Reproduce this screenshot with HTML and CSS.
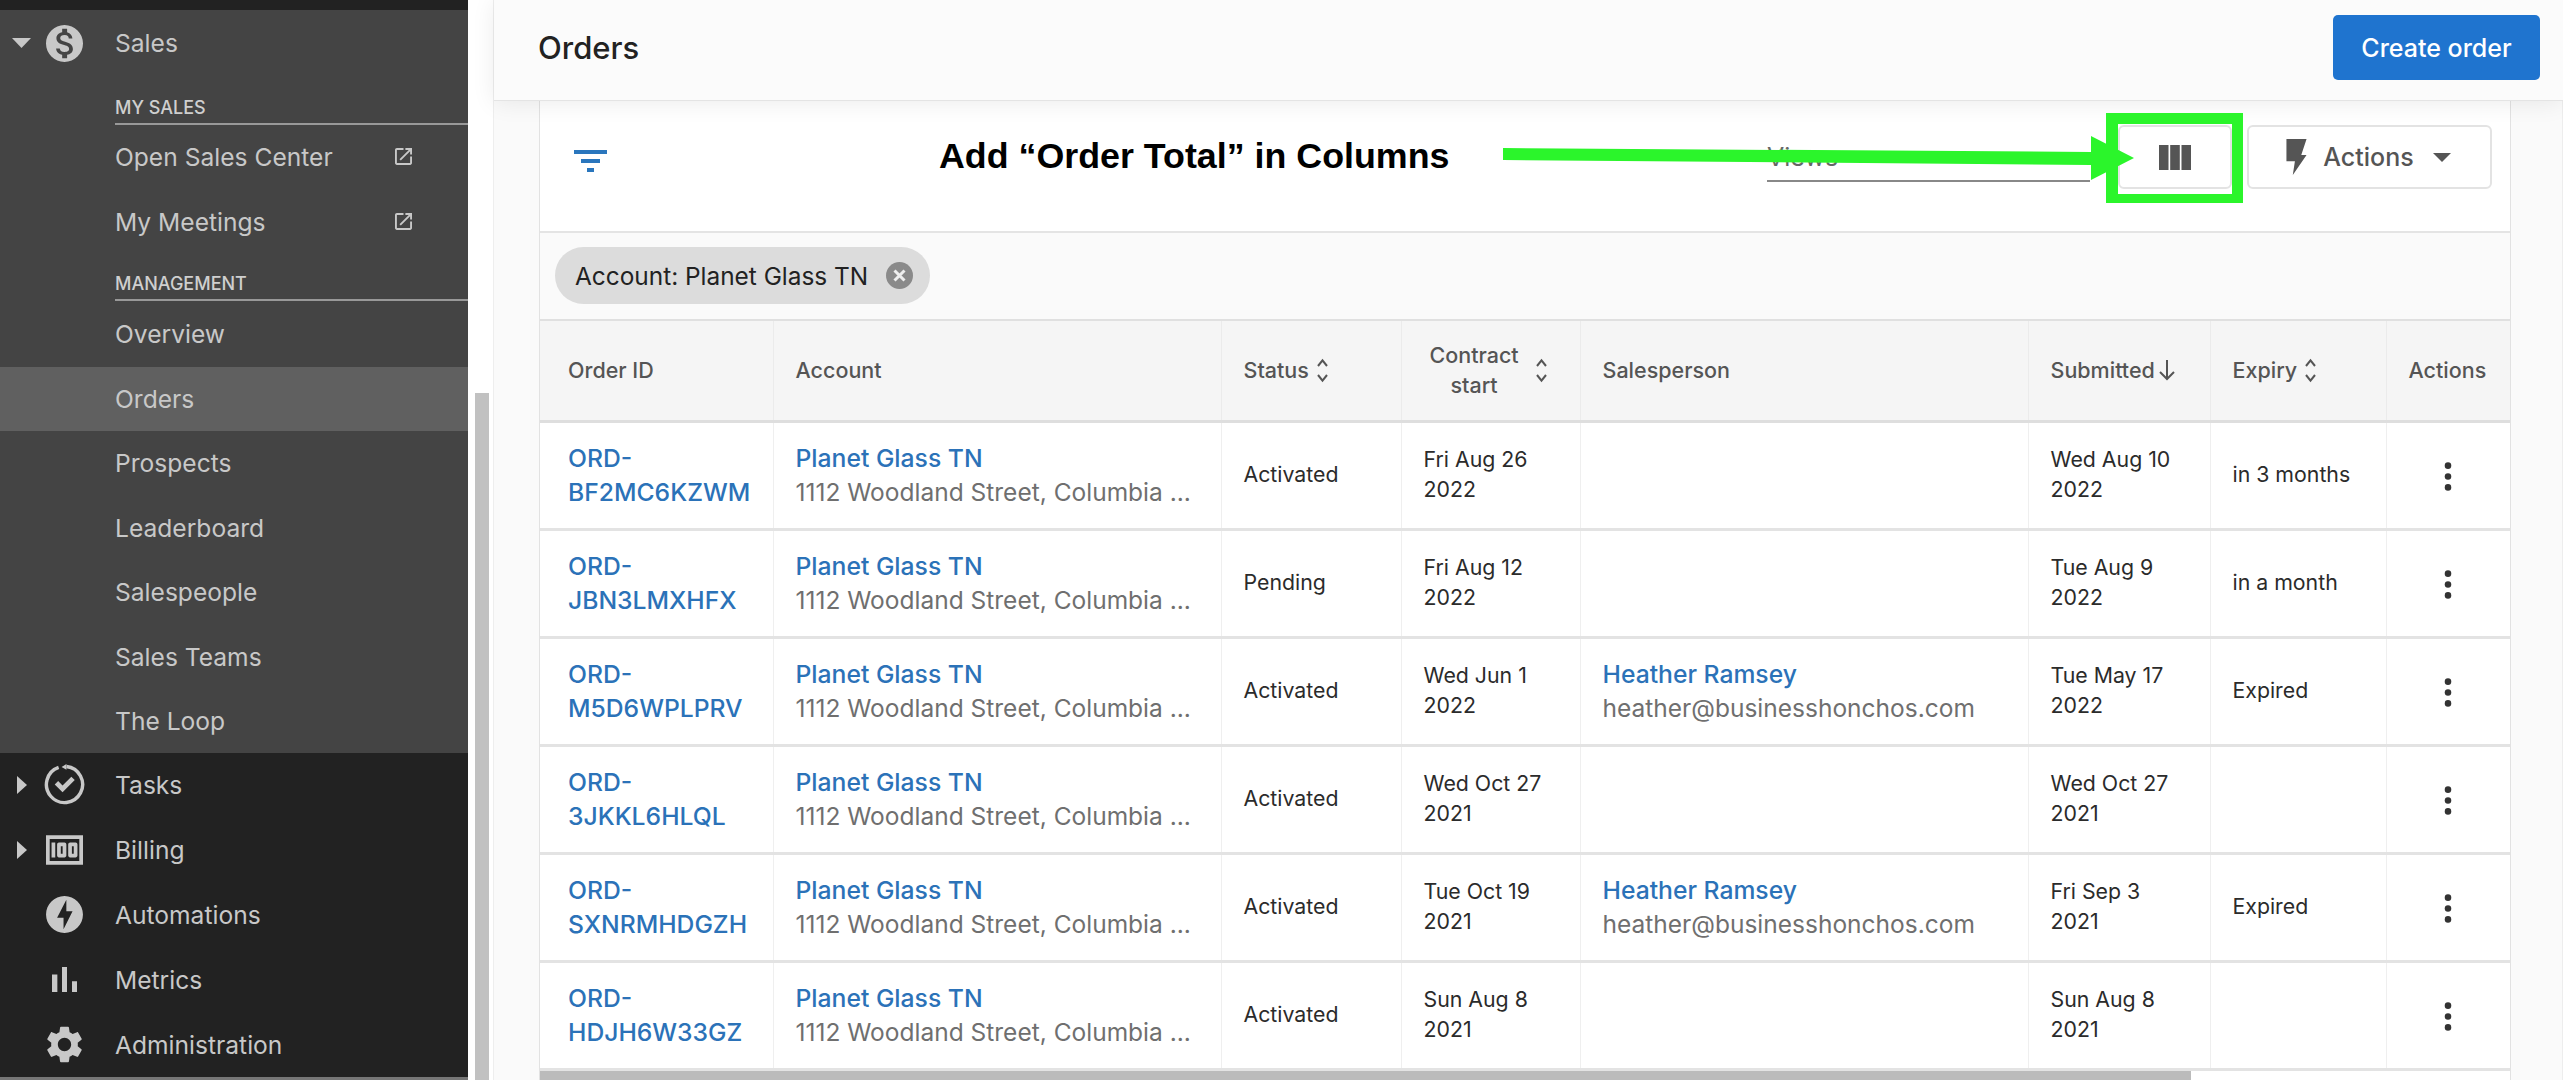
FILE: index.html
```html
<!DOCTYPE html>
<html lang="en">
<head>
<meta charset="utf-8">
<title>Orders</title>
<link rel="stylesheet" href="styles.css">
</head>
<body>
<aside class="sidebar">
  <div class="top-strip"></div>
  <div class="submenu">
    <div class="nav-row nav-main">
      <svg class="caret" viewBox="0 0 19 10"><path d="M0 0h19L9.500 10z"/></svg>
      <svg class="nav-icon" viewBox="2 2 20 20"><path d="M12 2C6.480 2 2 6.480 2 12s4.480 10 10 10 10-4.480 10-10S17.520 2 12 2zm1.410 16.090V20h-2.670v-1.930c-1.710-.36-3.160-1.460-3.270-3.400h1.960c.1 1.050.82 1.870 2.650 1.870 1.960 0 2.400-.98 2.400-1.590 0-.83-.44-1.610-2.670-2.140-2.480-.6-4.180-1.620-4.180-3.670 0-1.720 1.390-2.840 3.110-3.210V4h2.670v1.950c1.860.45 2.790 1.860 2.850 3.390H14.300c-.05-1.110-.64-1.870-2.220-1.870-1.500 0-2.400.68-2.400 1.640 0 .84.65 1.390 2.670 1.910s4.180 1.390 4.180 3.910c-.01 1.830-1.380 2.830-3.120 3.160z"/></svg>
      <span>Sales</span>
    </div>
    <div class="nav-section first">MY SALES</div>
    <div class="nav-row nav-sub"><span>Open Sales Center</span>
      <svg class="ext" viewBox="3 3 18 18"><path d="M19 19H5V5h7V3H5c-1.110 0-2 .9-2 2v14c0 1.100.89 2 2 2h14c1.100 0 2-.9 2-2v-7h-2v7zM14 3v2h3.590l-9.830 9.830 1.410 1.410L19 6.410V10h2V3h-7z"/></svg></div>
    <div class="nav-row nav-sub"><span>My Meetings</span>
      <svg class="ext" viewBox="3 3 18 18"><path d="M19 19H5V5h7V3H5c-1.110 0-2 .9-2 2v14c0 1.100.89 2 2 2h14c1.100 0 2-.9 2-2v-7h-2v7zM14 3v2h3.590l-9.830 9.830 1.410 1.410L19 6.410V10h2V3h-7z"/></svg></div>
    <div class="nav-section">MANAGEMENT</div>
    <div class="nav-row nav-sub"><span>Overview</span></div>
    <div class="nav-row nav-sub active"><span>Orders</span></div>
    <div class="nav-row nav-sub"><span>Prospects</span></div>
    <div class="nav-row nav-sub"><span>Leaderboard</span></div>
    <div class="nav-row nav-sub"><span>Salespeople</span></div>
    <div class="nav-row nav-sub"><span>Sales Teams</span></div>
    <div class="nav-row nav-sub"><span>The Loop</span></div>
  </div>
  <div class="nav-row nav-main">
    <svg class="caret-r" viewBox="0 0 10 18"><path d="M0 0l10 9-10 9z"/></svg>
    <svg class="nav-icon large" viewBox="0 0 44 44"><path class="ring" d="M24 3.600A18.500 18.500 0 1 1 16 4.500"/><path d="M24 1v6l-5-3zM12 22l3.500-3.500 4.500 4.500 9-9 3.500 3.500L20 30z"/></svg>
    <span>Tasks</span>
  </div>
  <div class="nav-row nav-main">
    <svg class="caret-r" viewBox="0 0 10 18"><path d="M0 0l10 9-10 9z"/></svg>
    <svg class="nav-icon money" viewBox="2 4 20 16"><path d="M5 8h2v8H5zm7 0H9c-.55 0-1 .45-1 1v6c0 .55.45 1 1 1h3c.55 0 1-.45 1-1V9c0-.55-.45-1-1-1zm-1 6h-1v-4h1v4zm7-6h-3c-.55 0-1 .45-1 1v6c0 .55.45 1 1 1h3c.55 0 1-.45 1-1V9c0-.55-.45-1-1-1zm-1 6h-1v-4h1v4zM2 4v16h20V4H2zm2 14V6h16v12H4z"/></svg>
    <span>Billing</span>
  </div>
  <div class="nav-row nav-main">
    <svg class="nav-icon" viewBox="2 2 20 20"><path d="M12 2.020c-5.510 0-9.980 4.470-9.980 9.980s4.470 9.980 9.980 9.980 9.980-4.470 9.980-9.980S17.510 2.020 12 2.020zM11.480 20v-6.260H8L13 4v6.260h3.350L11.480 20z"/></svg>
    <span>Automations</span>
  </div>
  <div class="nav-row nav-main">
    <svg class="nav-icon bars" viewBox="5 5 14 14"><path d="M5 9.200h3V19H5zM10.600 5h2.800v14h-2.800zm5.600 8H19v6h-2.800z"/></svg>
    <span>Metrics</span>
  </div>
  <div class="nav-row nav-main">
    <svg class="nav-icon" viewBox="2.500 2 19 20"><path d="M19.140 12.940c.04-.3.06-.61.06-.94 0-.32-.02-.64-.07-.94l2.030-1.580c.18-.14.23-.41.12-.61l-1.920-3.320c-.12-.22-.37-.29-.59-.22l-2.390.96c-.5-.38-1.030-.7-1.620-.94l-.36-2.540c-.04-.24-.24-.41-.48-.41h-3.840c-.24 0-.43.17-.47.41l-.36 2.540c-.59.24-1.130.57-1.620.94l-2.390-.96c-.22-.08-.47 0-.59.22L2.740 8.870c-.12.21-.08.47.12.61l2.030 1.580c-.05.3-.09.63-.09.94s.02.64.07.94l-2.030 1.580c-.18.14-.23.41-.12.61l1.920 3.320c.12.22.37.29.59.22l2.390-.96c.5.38 1.030.7 1.620.94l.36 2.540c.05.24.24.41.48.41h3.840c.24 0 .44-.17.47-.41l.36-2.540c.59-.24 1.130-.56 1.620-.94l2.390.96c.22.08.47 0 .59-.22l1.920-3.320c.12-.22.07-.47-.12-.61l-2.010-1.580zM12 15.600c-1.980 0-3.600-1.620-3.600-3.600s1.620-3.600 3.600-3.600 3.600 1.620 3.600 3.600-1.620 3.600-3.600 3.600z"/></svg>
    <span>Administration</span>
  </div>
</aside>
<div class="gutter"><div class="thumb"></div></div>
<main class="main">
  <header class="page-header">
    <h1>Orders</h1>
    <button class="btn-primary">Create order</button>
  </header>
  <div class="content">
    <section class="card">
      <div class="toolbar">
        <svg class="filter-icon" viewBox="0 0 33 22"><path d="M0 0h33v4H0zM7 9h19v4H7zM13 18h7v4h-7z"/></svg>
        <div class="views"><span>Views</span><i class="views-caret"></i></div>
        <button class="btn-outline btn-cols"><svg viewBox="0 0 32 25"><path d="M0 0h9.500v25H0zM11.200 0h9.600v25h-9.600zM22.500 0H32v25h-9.500z"/></svg></button>
        <button class="btn-outline btn-actions">
          <svg class="bolt" viewBox="0 0 19 34"><path d="M0 0H19L14 15H19L6 34L8 21H0z"/></svg>
          <span>Actions</span>
          <svg class="drop" viewBox="0 0 18 9"><path d="M0 0h18L9 9z"/></svg>
        </button>
      </div>
      <div class="chips">
        <div class="chip"><span>Account: Planet Glass TN</span>
          <svg viewBox="0 0 27 27"><circle cx="13.500" cy="13.500" r="13.500"/><path d="M8.500 8.500l10 10M18.500 8.500l-10 10"/></svg></div>
      </div>
      <table class="orders">
        <colgroup><col class="c1"><col class="c2"><col class="c3"><col class="c4"><col class="c5"><col class="c6"><col class="c7"><col class="c8"></colgroup>
        <thead>
          <tr>
            <th>Order ID</th>
            <th>Account</th>
            <th><div class="th-flex">Status <svg class="sort" viewBox="0 0 12 24"><path d="M2 8l4-5 4 5M2 16l4 5 4-5"/></svg></div></th>
            <th class="th-contract"><div class="th-flex"><span class="center">Contract<br>start</span><svg class="sort" viewBox="0 0 12 24"><path d="M2 8l4-5 4 5M2 16l4 5 4-5"/></svg></div></th>
            <th>Salesperson</th>
            <th><div class="th-flex tight">Submitted<svg class="sort-down" viewBox="0 0 20 24"><path d="M10 2v19M3 14l7 7 7-7"/></svg></div></th>
            <th><div class="th-flex">Expiry <svg class="sort" viewBox="0 0 12 24"><path d="M2 8l4-5 4 5M2 16l4 5 4-5"/></svg></div></th>
            <th>Actions</th>
          </tr>
        </thead>
        <tbody>
          <tr>
            <td class="id"><a>ORD-<br>BF2MC6KZWM</a></td>
            <td><a class="name">Planet Glass TN</a><div class="sub">1112 Woodland Street, Columbia ...</div></td>
            <td>Activated</td><td>Fri Aug 26<br>2022</td><td></td><td>Wed Aug 10<br>2022</td><td>in 3 months</td>
            <td class="kebab"><svg viewBox="0 0 8 32"><circle cx="4" cy="4" r="3.600"/><circle cx="4" cy="16" r="3.600"/><circle cx="4" cy="28" r="3.600"/></svg></td>
          </tr>
          <tr>
            <td class="id"><a>ORD-<br>JBN3LMXHFX</a></td>
            <td><a class="name">Planet Glass TN</a><div class="sub">1112 Woodland Street, Columbia ...</div></td>
            <td>Pending</td><td>Fri Aug 12<br>2022</td><td></td><td>Tue Aug 9<br>2022</td><td>in a month</td>
            <td class="kebab"><svg viewBox="0 0 8 32"><circle cx="4" cy="4" r="3.600"/><circle cx="4" cy="16" r="3.600"/><circle cx="4" cy="28" r="3.600"/></svg></td>
          </tr>
          <tr>
            <td class="id"><a>ORD-<br>M5D6WPLPRV</a></td>
            <td><a class="name">Planet Glass TN</a><div class="sub">1112 Woodland Street, Columbia ...</div></td>
            <td>Activated</td><td>Wed Jun 1<br>2022</td>
            <td><a class="name">Heather Ramsey</a><div class="sub">heather@businesshonchos.com</div></td>
            <td>Tue May 17<br>2022</td><td>Expired</td>
            <td class="kebab"><svg viewBox="0 0 8 32"><circle cx="4" cy="4" r="3.600"/><circle cx="4" cy="16" r="3.600"/><circle cx="4" cy="28" r="3.600"/></svg></td>
          </tr>
          <tr>
            <td class="id"><a>ORD-<br>3JKKL6HLQL</a></td>
            <td><a class="name">Planet Glass TN</a><div class="sub">1112 Woodland Street, Columbia ...</div></td>
            <td>Activated</td><td>Wed Oct 27<br>2021</td><td></td><td>Wed Oct 27<br>2021</td><td></td>
            <td class="kebab"><svg viewBox="0 0 8 32"><circle cx="4" cy="4" r="3.600"/><circle cx="4" cy="16" r="3.600"/><circle cx="4" cy="28" r="3.600"/></svg></td>
          </tr>
          <tr>
            <td class="id"><a>ORD-<br>SXNRMHDGZH</a></td>
            <td><a class="name">Planet Glass TN</a><div class="sub">1112 Woodland Street, Columbia ...</div></td>
            <td>Activated</td><td>Tue Oct 19<br>2021</td>
            <td><a class="name">Heather Ramsey</a><div class="sub">heather@businesshonchos.com</div></td>
            <td>Fri Sep 3<br>2021</td><td>Expired</td>
            <td class="kebab"><svg viewBox="0 0 8 32"><circle cx="4" cy="4" r="3.600"/><circle cx="4" cy="16" r="3.600"/><circle cx="4" cy="28" r="3.600"/></svg></td>
          </tr>
          <tr>
            <td class="id"><a>ORD-<br>HDJH6W33GZ</a></td>
            <td><a class="name">Planet Glass TN</a><div class="sub">1112 Woodland Street, Columbia ...</div></td>
            <td>Activated</td><td>Sun Aug 8<br>2021</td><td></td><td>Sun Aug 8<br>2021</td><td></td>
            <td class="kebab"><svg viewBox="0 0 8 32"><circle cx="4" cy="4" r="3.600"/><circle cx="4" cy="16" r="3.600"/><circle cx="4" cy="28" r="3.600"/></svg></td>
          </tr>
        </tbody>
      </table>
      <div class="hscroll"></div>
    </section>
  </div>
</main>
<div class="note">Add “Order Total” in Columns</div>
<svg class="note-art" viewBox="0 0 2563 1080">
  <path class="green" d="M1503 148L2091 152V136L2134 158L2091 180V165L1503 160z"/>
  <path class="green" fill-rule="evenodd" d="M2106 113H2243V203H2106zM2118 124V194H2232V124z"/>
</svg>
</body>
</html>
```

FILE: styles.css
```css
* { box-sizing: border-box; }
html, body { margin: 0; height: 100%; overflow: hidden; }
body {
  display: flex;
  position: relative;
  height: 1080px;
  font-family: Inter, "Liberation Sans", sans-serif;
  background: #fafafa;
  color: #2b2b2b;
}

/* Sidebar */
.sidebar {
  width: 468px;
  flex: none;
  background: #222;
  color: #c8c8c8;
  font-size: 24.600px;
  border-bottom: 3px solid #777;
}
.top-strip { height: 10px; background: #222; }
.submenu { background: #444; height: 743px; }
.submenu + .nav-row { margin-top: -1px; }
.nav-row { display: flex; align-items: center; height: 65px; position: relative; }
.nav-row span { white-space: nowrap; }
.nav-main { padding-left: 115px; }
.nav-sub { padding-left: 115px; color: #c8c8c8; }
.nav-sub.active { background: #606060; }
.nav-section {
  margin-left: 115px;
  border-bottom: 2px solid #999;
  font-size: 18px;
  font-weight: 500;
  color: #cfcfcf;
  line-height: 32px;
  white-space: nowrap;
}
.submenu .nav-main { height: 66px; }
.submenu .nav-section.first { height: 49px; padding-top: 16px; margin-bottom: 0; }
.submenu .nav-section { height: 47px; padding-top: 14px; margin-bottom: 1px; }
.submenu .nav-sub { height: 64.500px; }
.nav-icon { position: absolute; left: 46px; top: 50%; width: 37px; height: 37px; margin-top: -18.500px; fill: #c8c8c8; }
.nav-icon.large { left: 43px; width: 43px; height: 43px; margin-top: -21.500px; }
.nav-icon .ring { fill: none; stroke: #c8c8c8; stroke-width: 3.500; }
.nav-icon.money { height: 30px; margin-top: -15px; }
.nav-icon.bars { left: 52px; width: 25px; height: 25px; margin-top: -12.500px; }
.caret { position: absolute; left: 12px; top: 50%; width: 19px; height: 10px; margin-top: -5px; fill: #c8c8c8; }
.caret-r { position: absolute; left: 17px; top: 50%; width: 10px; height: 18px; margin-top: -9px; fill: #c8c8c8; }
.ext { position: absolute; left: 395px; top: 50%; width: 17px; height: 17px; margin-top: -9px; fill: #c8c8c8; }

/* Gutter */
.gutter {
  width: 26px;
  flex: none;
  background: #fff;
  border-right: 1px solid #eee;
  padding: 393px 4px 0 7px;
}
.thumb { height: 100%; background: #c1c1c1; }

/* Main */
.main { flex: 1; min-width: 0; display: flex; flex-direction: column; }
.page-header {
  height: 101px;
  flex: none;
  display: flex;
  align-items: center;
  justify-content: space-between;
  padding: 0 23px 5px 44px;
  background: #fbfbfb;
  border-bottom: 1px solid #e4e4e4;
  box-shadow: 0 2px 22px rgba(0,0,0,.08);
  position: relative;
  z-index: 2;
}
.page-header h1 { margin: 0; font-size: 31px; font-weight: 500; color: #222; }
.btn-primary {
  width: 207px;
  height: 65px;
  border: 0;
  border-radius: 5px;
  background: #1f74cf;
  color: #fff;
  font: 500 25px Inter, "Liberation Sans", sans-serif;
}
.content { flex: 1; padding: 0 51px 0 45px; border-right: 1px solid #ededed; min-height: 0; }
.card { background: #fff; border-left: 1px solid #e2e2e2; border-right: 1px solid #e2e2e2; height: 100%; overflow: hidden; display: flex; flex-direction: column; }

.toolbar {
  height: 132px;
  flex: none;
  display: flex;
  align-items: flex-start;
  border-bottom: 2px solid #e4e4e4;
  padding-left: 34px;
}
.filter-icon { width: 33px; height: 22px; margin-top: 49px; fill: #2a76bd; }
.views {
  margin-left: 1160px;
  margin-top: 38px;
  width: 323px;
  height: 43px;
  padding-bottom: 5px;
  border-bottom: 2px solid #888;
  color: #666;
  font-size: 25px;
  display: flex;
  justify-content: space-between;
  align-items: center;
  padding-right: 6px;
}
.views-caret { width: 16px; height: 2px; background: #777; }
.btn-outline {
  height: 64px;
  margin-top: 24px;
  border: 2px solid #e3e3e3;
  border-radius: 6px;
  background: #fff;
  display: flex;
  align-items: center;
  justify-content: center;
  padding: 0;
  color: #555;
  font: 500 25px Inter, "Liberation Sans", sans-serif;
}
.btn-cols { width: 114px; margin-left: 28px; }
.btn-cols svg { width: 32px; height: 25px; fill: #555; }
.btn-actions { width: 245px; margin-left: 15px; }
.bolt { width: 21px; height: 36px; fill: #555; margin-right: 16px; margin-left: -2px; }
.drop { width: 18px; height: 9px; fill: #555; margin-left: 19px; }

.chips { height: 86px; flex: none; background: #fafafa; padding: 14px 0 0 15px; }
.chip {
  display: inline-flex;
  align-items: center;
  height: 57px;
  width: 375px;
  padding-left: 20px;
  border-radius: 29px;
  background: #dcdcdc;
  font-size: 24.400px;
  color: #222;
  white-space: nowrap;
}
.chip svg { width: 27px; height: 27px; position: absolute; left: 886px; }
.chip circle { fill: #8a8a8a; }
.chip path { stroke: #eee; stroke-width: 3; fill: none; }

table.orders { border-collapse: collapse; table-layout: fixed; width: 1970px; flex: none; }
.c1 { width: 233px; } .c2 { width: 448px; } .c3 { width: 180px; } .c4 { width: 179px; }
.c5 { width: 448px; } .c6 { width: 182px; } .c7 { width: 176px; } .c8 { width: 124px; }
th {
  height: 101px;
  background: #f5f5f5;
  color: #555;
  font-size: 21.500px;
  font-weight: 500;
  text-align: left;
  padding: 0 0 0 22px;
  line-height: 30px;
  border: 1px solid #ebebeb;
  border-top: 2px solid #e0e0e0;
  border-bottom: 3px solid #dedede;
}
th:first-child { padding-left: 28px; }
th:first-child, td:first-child { border-left: 0; }
th:last-child, td:last-child { border-right: 0; }
.th-flex { display: flex; align-items: center; gap: 6px; }
.th-contract .th-flex { gap: 15px; padding-left: 6px; }
.th-contract .center { text-align: center; }
.th-flex.tight { gap: 2px; }
.sort { width: 15px; height: 27px; fill: none; stroke: #555; stroke-width: 1.800; }
.sort-down { width: 20px; height: 24px; fill: none; stroke: #555; stroke-width: 2; }
td {
  height: 108px;
  padding: 0 0 2px 22px;
  font-size: 21.300px;
  line-height: 30px;
  color: #2b2b2b;
  border: 1px solid #efefef;
  border-top: 3px solid #e3e3e3;
  border-bottom: 3px solid #e3e3e3;
  vertical-align: middle;
}
td.id { padding-left: 28px; padding-bottom: 0; }
td:has(a) { padding-bottom: 0; }
td a { color: #2b72b8; font-size: 24.700px; font-weight: 500; line-height: 34px; }
td a.name { display: block; white-space: nowrap; }
td.id a { display: block; }
td .sub { color: #6f6f6f; font-size: 24.500px; line-height: 34px; white-space: nowrap; }
td.kebab { padding: 0; text-align: center; }
.kebab svg { width: 8px; height: 29px; fill: #333; display: inline-block; vertical-align: middle; }
.hscroll { height: 11px; width: 1651px; background: #bbb; flex: none; }

/* Annotation layer */
.note {
  position: absolute;
  left: 939px;
  top: 136px;
  font: 700 35.800px "Liberation Sans", Arial, sans-serif;
  color: #000;
  white-space: nowrap;
  z-index: 5;
}
.note-art { position: absolute; left: 0; top: 0; width: 2563px; height: 1080px; z-index: 5; pointer-events: none; }
.green { fill: #2bf52b; }
```
